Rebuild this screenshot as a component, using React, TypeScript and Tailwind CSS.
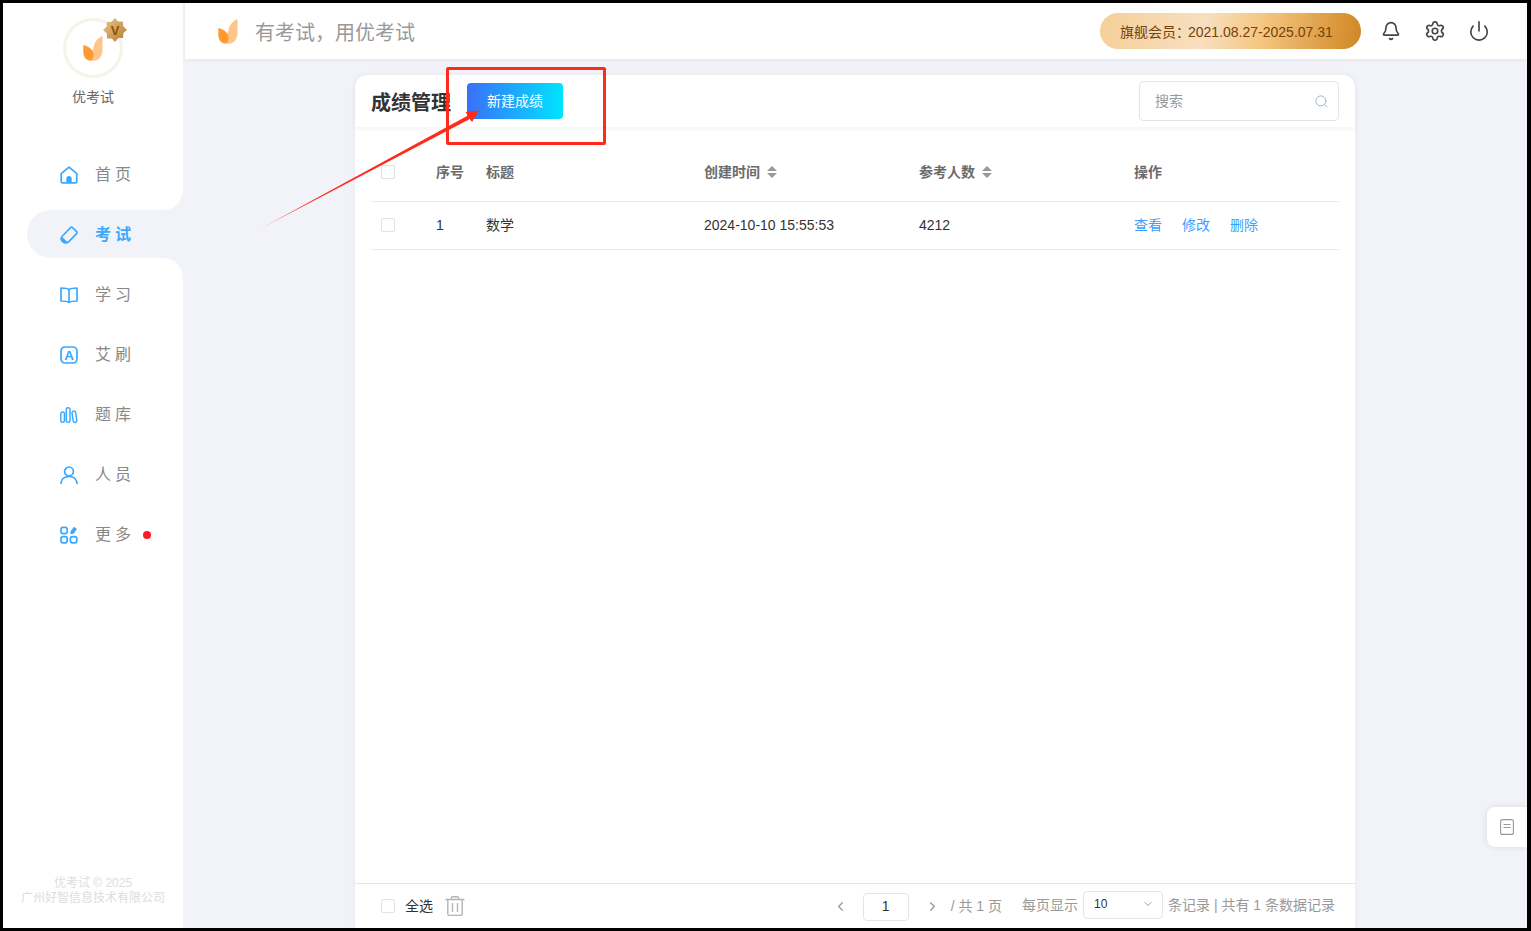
import { Bell, ChevronDown, ChevronLeft, ChevronRight, Power, Search, Settings } from "lucide-react"

const font = { fontFamily: '"Liberation Sans", "Noto Sans CJK SC", sans-serif' }

function Logo({ className }: { className: string }) {
  return (
    <svg viewBox="0 0 20 25" className={className}>
      <path d="M19.5 0C15 2 11 6 10.5 12L6 24.6C6.5 24.8 9 24.9 11 24.8C16 24.6 19.5 20 19.5 14Z" fill="#ffc48a" />
      <path d="M0.3 9C5 10 10 13 10.5 18C10.8 21.5 9.5 24.5 7 24.5C3 24.5 0.3 20.5 0.3 16Z" fill="#ff9a30" />
    </svg>
  )
}

function HomeIcon() {
  return (
    <svg viewBox="0 0 18 18" className="h-[18px] w-[18px]" fill="none" stroke="#3aa8ff" strokeWidth="1.7">
      <path d="M1.2 7.6L9 1.2L16.8 7.6V15.5C16.8 16.2 16.2 16.8 15.5 16.8H2.5C1.8 16.8 1.2 16.2 1.2 15.5Z" strokeLinejoin="round" />
      <path d="M6.3 16.8V12.6C6.3 11.2 7.5 10 9 10C10.5 10 11.7 11.2 11.7 12.6V16.8Z" fill="#3aa8ff" stroke="none" />
    </svg>
  )
}

function EraserIcon() {
  return (
    <svg viewBox="0 0 18 18" className="h-[18px] w-[18px]" fill="none" stroke="#3aa8ff" strokeWidth="1.6">
      <path d="M1.6 10.2L4.8 13.5L7.6 16.4L5.6 16.9C4 17.2 2.8 16.6 1.8 15.6C0.6 14.2 0.4 12 1.6 10.2Z" fill="#3aa8ff" stroke="none" />
      <path d="M10.6 1.6C11.2 1 12 1 12.6 1.6L16.6 5.6C17.1 6.2 17.1 7 16.6 7.6L8.6 15.9C7.6 16.8 6 16.9 5 16.9C3.5 16.9 1.1 14.6 1.1 13C1.1 12 1.6 10.8 2.4 10Z" strokeLinejoin="round" />
    </svg>
  )
}

function BookIcon() {
  return (
    <svg viewBox="0 0 18 18" className="h-[18px] w-[18px]" fill="none" stroke="#3aa8ff" strokeWidth="1.7" strokeLinejoin="round">
      <path d="M9 3.6C7.6 2.4 5.6 2 1 2V15C5.6 15 7.6 15.4 9 16.4C10.4 15.4 12.4 15 17 15V2C12.4 2 10.4 2.4 9 3.6Z" />
      <path d="M9 3.6V16.4" />
    </svg>
  )
}

function LetterIcon() {
  return (
    <svg viewBox="0 0 18 18" className="h-[18px] w-[18px]" fill="none">
      <rect x="1" y="1" width="16" height="16" rx="4" stroke="#3aa8ff" strokeWidth="1.7" />
      <text x="9" y="14" textAnchor="middle" fontSize="13.5" fontWeight="700" fill="#3aa8ff" fontFamily="Liberation Sans">A</text>
    </svg>
  )
}

function BarsIcon() {
  return (
    <svg viewBox="0 0 20 18" className="h-[18px] w-[20px]" fill="none" stroke="#3aa8ff" strokeWidth="1.6">
      <rect x="0.9" y="5.6" width="4" height="11.6" rx="2" />
      <rect x="6.9" y="1" width="4.2" height="16.2" rx="2" />
      <rect x="14" y="4.6" width="4" height="12.8" rx="2" transform="rotate(-8 16 11)" />
    </svg>
  )
}

function UserIcon() {
  return (
    <svg viewBox="0 0 18 18" className="h-[18px] w-[18px]" fill="none" stroke="#3aa8ff" strokeWidth="1.7">
      <circle cx="9" cy="5.4" r="4.4" />
      <path d="M0.9 17.6C1.4 13 4.6 10.5 9 10.5C13.4 10.5 16.6 13 17.1 17.6" strokeLinecap="round" />
    </svg>
  )
}

function MoreIcon() {
  return (
    <svg viewBox="0 0 18 18" className="h-[18px] w-[18px]" fill="none" stroke="#3aa8ff" strokeWidth="1.7">
      <rect x="1" y="1.4" width="6.2" height="6.2" rx="2" />
      <rect x="1" y="10.6" width="6.2" height="6.2" rx="2" />
      <rect x="10.4" y="10.6" width="6.4" height="6.2" rx="2" />
      <path d="M14 0.8L17 3L13.6 7.8L10.4 8.2L10.6 5.2Z" fill="#3aa8ff" stroke="none" />
    </svg>
  )
}

const navTop = [{ label: "首页", icon: <HomeIcon /> }]
const navBottom = [
  { label: "学习", icon: <BookIcon /> },
  { label: "艾刷", icon: <LetterIcon /> },
  { label: "题库", icon: <BarsIcon /> },
  { label: "人员", icon: <UserIcon /> },
  { label: "更多", icon: <MoreIcon />, dot: true },
]

function NavItem({ label, icon, dot }: { label: string; icon: React.ReactNode; dot?: boolean }) {
  return (
    <div className="flex h-[60px] items-center pl-[57px] pt-[2px]">
      <span className="flex w-[18px] justify-center">{icon}</span>
      <span className="ml-[17px] text-[16px] tracking-[4px] text-[#888]">{label}</span>
      {dot && <span className="ml-[8px] h-2 w-2 rounded-full bg-[#ff1a2a]" />}
    </div>
  )
}

function Sidebar() {
  return (
    <aside className="flex w-[180px] shrink-0 flex-col">
      <div className="h-[207px] rounded-br-[20px] bg-white">
        <div className="flex h-[141px] flex-col items-center pt-[15px]">
          <div className="relative flex h-[60px] w-[60px] items-center justify-center rounded-full border-[3px] border-[#f8f3ea]">
            <Logo className="h-[25px] w-5" />
            <svg viewBox="0 0 24 24" className="absolute -right-[7px] -top-[3px] h-6 w-6">
              <defs>
                <linearGradient id="badge" x1="0" y1="0" x2="1" y2="1">
                  <stop offset="0" stopColor="#e8c78c" />
                  <stop offset="1" stopColor="#b87a2a" />
                </linearGradient>
              </defs>
              <path d="M12 0L15 3.6L19.8 3.4L20.2 8.2L24 12L20.4 15L20 20L15.4 20L12 24L8.8 20.4L4 20.4L3.8 15.6L0 12L3.6 8.8L3.8 4L8.6 3.8Z" fill="url(#badge)" />
              <text x="12" y="16.6" textAnchor="middle" fontSize="13" fontWeight="700" fill="#8a5208" fontFamily="Liberation Sans">V</text>
            </svg>
          </div>
          <p className="mt-[10px] text-[14px] leading-[18px] text-[#666]">优考试</p>
        </div>
        {navTop.map((item) => (
          <NavItem key={item.label} {...item} />
        ))}
      </div>
      <div className="h-[48px] bg-white">
        <div className="ml-[24px] flex h-[48px] items-center rounded-l-[24px] bg-[#f1f3f8] pl-[33px] pt-[2px]">
          <span className="flex w-[18px] justify-center">
            <EraserIcon />
          </span>
          <span className="ml-[17px] text-[16px] font-bold tracking-[4px] text-[#3aa8ff]">考试</span>
        </div>
      </div>
      <div className="flex flex-1 flex-col rounded-tr-[20px] bg-white pt-[6px]">
        {navBottom.map((item) => (
          <NavItem key={item.label} {...item} />
        ))}
        <div className="mt-auto pb-[22px] text-center text-[12px] leading-[15px] text-[#ddd]">
          <p>优考试 © 2025</p>
          <p>广州好智信息技术有限公司</p>
        </div>
      </div>
    </aside>
  )
}

function Topbar() {
  return (
    <header className="flex h-[56px] shrink-0 items-center bg-white pl-[33px] pr-[37px] shadow-[0_1px_4px_rgba(0,0,0,0.06)]">
      <Logo className="h-[25px] w-5" />
      <span className="ml-[17px] pt-[3px] text-[20px] text-[#999]">有考试，用优考试</span>
      <div className="ml-auto flex h-9 w-[261px] items-center rounded-full bg-[linear-gradient(100deg,#f5cf98_0%,#f8dfc0_40%,#f5c680_62%,#cf8622_100%)] pl-5 pt-[2px] text-[14px] text-[#74420c]">
        旗舰会员：<span className="-ml-[2px]">2021.08.27-2025.07.31</span>
      </div>
      <div className="ml-[19px] flex items-center gap-[22px] text-[#444]">
        <Bell size={20} strokeWidth={2} className="mx-px" />
        <Settings size={22} strokeWidth={1.8} />
        <Power size={22} strokeWidth={1.8} />
      </div>
    </header>
  )
}

function SortCaret() {
  return (
    <svg viewBox="0 0 10 12" className="ml-[7px] h-3 w-[10px]" fill="#999">
      <path d="M5 0L10 5H0Z" />
      <path d="M5 12L0 7H10Z" />
    </svg>
  )
}

function Checkbox({ className = "" }: { className?: string }) {
  return <span className={`block h-[14px] w-[14px] rounded-[2px] border border-[#e3e3e3] bg-white ${className}`} />
}

const cols = "grid grid-cols-[55px_50px_218px_215px_215px_1fr] pl-[10px]"

function RecordsTable() {
  return (
    <div className="flex-1 px-4">
      <div className={`${cols} h-[75px] items-center border-b border-[#ebebeb] pt-[16px] text-[14px] font-bold text-[#6b6b6b]`}>
        <Checkbox />
        <span>序号</span>
        <span>标题</span>
        <span className="flex items-center">创建时间<SortCaret /></span>
        <span className="flex items-center">参考人数<SortCaret /></span>
        <span>操作</span>
      </div>
      <div className={`${cols} h-[48px] items-center border-b border-[#ebebeb] text-[14px] text-[#333]`}>
        <Checkbox className="mb-[2px]" />
        <span>1</span>
        <span>数学</span>
        <span>2024-10-10 15:55:53</span>
        <span>4212</span>
        <span className="flex gap-5 text-[#3aa0ff]">
          <span>查看</span>
          <span>修改</span>
          <span>删除</span>
        </span>
      </div>
    </div>
  )
}

function TrashIcon() {
  return (
    <svg viewBox="0 0 20 20" className="h-5 w-5" fill="none" stroke="#b4b4b4" strokeWidth="1.4">
      <path d="M0.5 3.5H19.5M6.5 3.5V2C6.5 1.2 7 0.7 7.8 0.7H12.2C13 0.7 13.5 1.2 13.5 2V3.5" />
      <path d="M2.8 3.5V18C2.8 18.8 3.4 19.4 4.2 19.4H15.8C16.6 19.4 17.2 18.8 17.2 18V3.5" />
      <path d="M7.5 7V16M12.5 7V16" />
    </svg>
  )
}

function Footer() {
  return (
    <footer className="flex h-[45px] shrink-0 items-center border-t border-[#e5e5e5] pl-[26px] pr-5 text-[14px]">
      <Checkbox />
      <span className="ml-[10px] text-[#333]">全选</span>
      <span className="ml-3">
        <TrashIcon />
      </span>
      <div className="ml-auto flex items-center text-[#999]">
        <ChevronLeft size={15} />
        <span className="ml-[15px] mt-[1px] flex h-7 w-[46px] items-center justify-center rounded-[4px] border border-[#e5e5e5] text-[#333]">1</span>
        <ChevronRight size={15} className="ml-4" />
        <span className="ml-[11px] mt-[1px]">/ 共 1 页</span>
        <span className="ml-5 -mt-[2px]">每页显示</span>
        <span className="ml-[5px] -mt-[2px] flex h-7 w-20 items-center justify-between rounded-[4px] border border-[#e5e5e5] pb-[2px] pl-[10px] pr-2 text-[12px] text-[#333]">
          10
          <ChevronDown size={12} className="text-[#999]" />
        </span>
        <span className="ml-[5px] -mt-[2px]">条记录 | 共有 1 条数据记录</span>
      </div>
    </footer>
  )
}

export default function App() {
  return (
    <div className="relative h-[931px] w-[1531px] overflow-hidden" style={font}>
      <div className="box-border flex h-full w-full border-[3px] border-r-[4px] border-black bg-[#f1f3f8]">
        <Sidebar />
        <main className="ml-[2px] flex min-w-0 flex-1 flex-col">
          <Topbar />
          <section className="ml-[170px] mt-4 flex w-[1000px] flex-1 flex-col rounded-t-xl bg-white shadow-[0_0_6px_rgba(0,0,0,0.05)]">
            <div className="flex h-[52px] shrink-0 items-center rounded-t-xl px-4 shadow-[0_2px_4px_rgba(0,0,0,0.05)]">
              <h1 className="pt-[3px] text-[20px] font-bold text-[#333]">成绩管理</h1>
              <button className="ml-4 h-9 w-24 rounded-[4px] bg-[linear-gradient(90deg,#3a6ff8,#00e4ff)] text-[14px] text-white">新建成绩</button>
              <div className="ml-auto flex h-10 w-[200px] items-center justify-between rounded-[4px] border border-[#e5e5e5] pl-[15px] pr-[9px] text-[14px] text-[#999]">
                搜索
                <Search size={15} strokeWidth={1.5} className="text-[#9fb2c4]" />
              </div>
            </div>
            <RecordsTable />
            <Footer />
          </section>
        </main>
      </div>

      {/* side tab */}
      <div className="absolute right-[4px] top-[807px] flex h-10 w-10 items-center justify-center rounded-l-lg bg-white shadow-[0_0_6px_rgba(0,0,0,0.1)]">
        <svg viewBox="0 0 14 16" className="h-4 w-[14px]" fill="none" stroke="#999" strokeWidth="1.1">
          <rect x="0.6" y="0.6" width="12.8" height="14.8" rx="2" />
          <path d="M3.5 5.5H10.5M3.5 8.5H10.5" />
        </svg>
      </div>

      {/* red annotation */}
      <div className="absolute left-[446px] top-[67px] h-[78px] w-[160px] rounded-[2px] border-[3px] border-[#ff2a1a]" />
      <svg className="absolute left-0 top-0 h-[931px] w-[1531px]" viewBox="0 0 1531 931" fill="none">
        <defs>
          <linearGradient id="arrow" gradientUnits="userSpaceOnUse" x1="258" y1="230" x2="310" y2="201">
            <stop offset="0" stopColor="#ff2a1a" stopOpacity="0.45" />
            <stop offset="1" stopColor="#ff2a1a" />
          </linearGradient>
        </defs>
        <path d="M258 230L468 115.5L465.5 112L479 110.5L472 122L469.8 119Z" fill="url(#arrow)" />
      </svg>
    </div>
  )
}
